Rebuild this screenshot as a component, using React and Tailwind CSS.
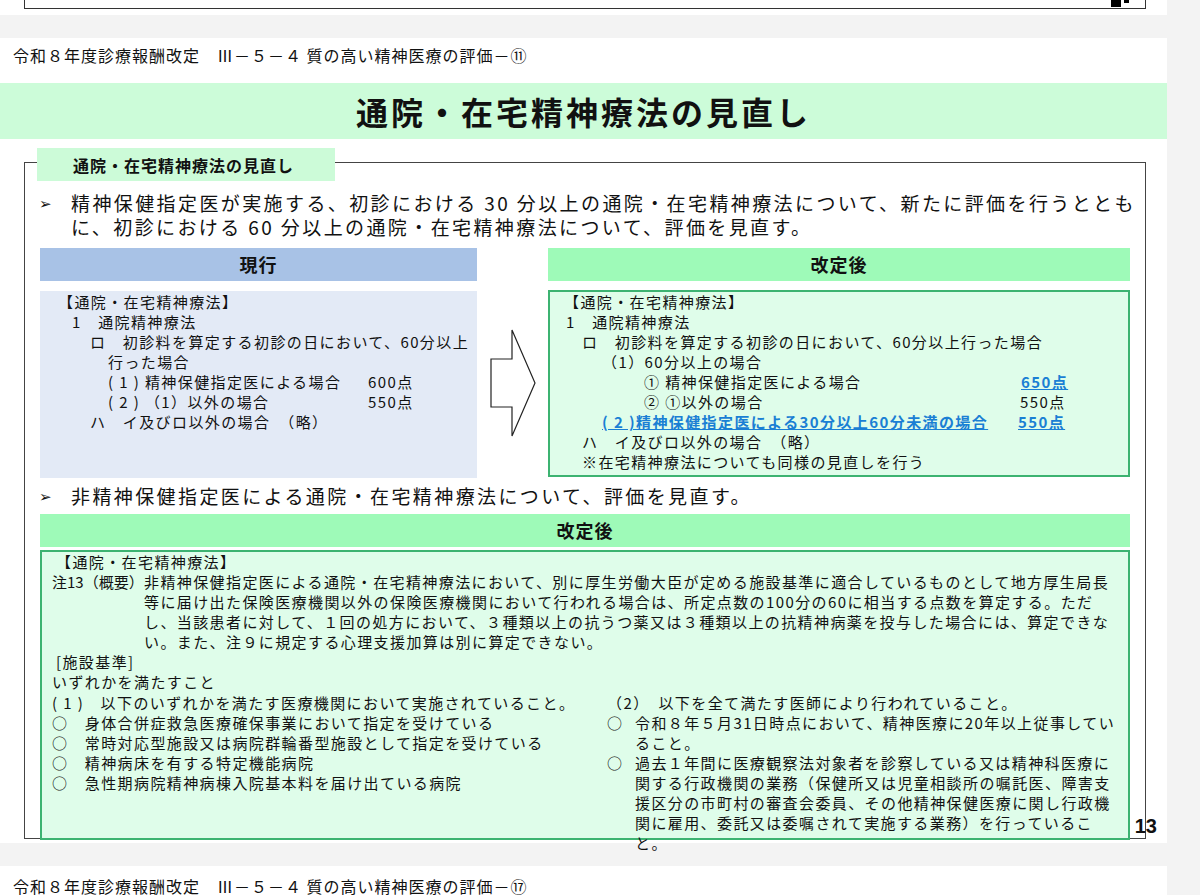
export default function App() {
  const f = { fontFamily: '"Noto Sans CJK JP", "Noto Sans", sans-serif' };
  return (
    <div className="w-[1200px] h-[895px] bg-[#f3f3f3] overflow-hidden text-[#111]" style={f}>
      <div className="w-[1167px] h-[15px] bg-white relative">
        <div className="ml-[24px] w-[1122px] h-[9px] border-l border-r border-b border-[#333]"></div>
        <div className="absolute right-[46px] top-0 w-[10px] h-[7px] bg-black"></div>
        <div className="absolute right-[38px] top-0 w-[5px] h-[3px] bg-black"></div>
      </div>
      <div className="h-[23px]"></div>
      <div className="w-[1167px] h-[805px] bg-white relative">
        <div className="h-[45px] pl-[13px] pt-[7px] text-[16px] tracking-[1px] leading-[20px]">令和８年度診療報酬改定　Ⅲ－５－４ 質の高い精神医療の評価－⑪</div>
        <div className="h-[56px] bg-[#ccfcd9] flex items-center justify-center text-[32px] font-bold tracking-[3px]">通院・在宅精神療法の見直し</div>
        <div className="relative mt-[23px] ml-[24px] w-[1122px] h-[677px] border border-[#444]">
          <div className="absolute left-[12px] top-[-15px] w-[298px] h-[33px] bg-[#ccfbd8] flex items-center pl-[36px] text-[16px] tracking-[1px] font-bold">通院・在宅精神療法の見直し</div>
          <div className="pt-[28px] pl-[14px] pr-[4px] text-[19px] tracking-[2.4px] leading-[24px] flex">
            <span className="w-[32px] shrink-0 text-[15px]">➢</span>
            <span>精神保健指定医が実施する、初診における 30 分以上の通院・在宅精神療法について、新たに評価を行うととも<br/>に、初診における 60 分以上の通院・在宅精神療法について、評価を見直す。</span>
          </div>
          <div className="flex mt-[9px] ml-[15px]">
            <div className="w-[437px]">
              <div className="h-[33px] bg-[#a8c2e6] flex items-center justify-center font-bold text-[18px] tracking-[1px]">現行</div>
              <div className="mt-[10px] h-[187px] bg-[#e3eaf6] pl-[18px] pt-[1px] text-[15px] tracking-[1.4px] leading-[20px]">
                <div>【通院・在宅精神療法】</div>
                <div className="pl-[14px]">1　通院精神療法</div>
                <div className="pl-[32px]">ロ　初診料を算定する初診の日において、60分以上</div>
                <div className="pl-[50px]">行った場合</div>
                <div className="pl-[50px] flex"><span className="w-[260px]">( 1 ) 精神保健指定医による場合</span><span>600点</span></div>
                <div className="pl-[50px] flex"><span className="w-[260px]">( 2 ) （1）以外の場合</span><span>550点</span></div>
                <div className="pl-[32px]">ハ　イ及びロ以外の場合　（略）</div>
              </div>
            </div>
            <div className="w-[71px] flex items-center justify-center pt-[40px]">
              <svg width="46" height="108" viewBox="0 0 46 108"><path d="M1 30 H22 V1 L45 54 L22 107 V78 H1 Z" fill="white" stroke="#222" strokeWidth="1.2"/></svg>
            </div>
            <div className="w-[582px]">
              <div className="h-[33px] bg-[#9efab8] flex items-center justify-center font-bold text-[18px] tracking-[1px]">改定後</div>
              <div className="mt-[9px] h-[187px] bg-[#dffdea] border-2 border-[#3cb371] pl-[14px] pt-[0px] text-[15px] tracking-[1.4px] leading-[20px]">
                <div>【通院・在宅精神療法】</div>
                <div className="pl-[2px]">1　通院精神療法</div>
                <div className="pl-[18px]">ロ　初診料を算定する初診の日において、60分以上行った場合</div>
                <div className="pl-[38px]">（1）60分以上の場合</div>
                <div className="pl-[80px] flex"><span className="w-[377px]">① 精神保健指定医による場合</span><span className="text-[#1a7fd4] font-bold underline">650点</span></div>
                <div className="pl-[80px] flex"><span className="w-[376px]">② ①以外の場合</span><span>550点</span></div>
                <div className="pl-[38px] flex text-[#1a7fd4] font-bold underline"><span className="w-[416px]">( 2 )精神保健指定医による30分以上60分未満の場合</span><span>550点</span></div>
                <div className="pl-[18px]">ハ　イ及びロ以外の場合　（略）</div>
                <div className="pl-[18px]">※在宅精神療法についても同様の見直しを行う</div>
              </div>
            </div>
          </div>
          <div className="pl-[14px] mt-[6px] text-[19px] tracking-[2.4px] leading-[24px] flex">
            <span className="w-[32px] shrink-0 text-[15px]">➢</span>
            <span>非精神保健指定医による通院・在宅精神療法について、評価を見直す。</span>
          </div>
          <div className="ml-[15px] w-[1090px] mt-[6px]">
            <div className="h-[33px] bg-[#9efab8] flex items-center justify-center font-bold text-[18px] tracking-[1px]">改定後</div>
            <div className="mt-[3px] h-[290px] bg-[#dffdea] border-2 border-[#3cb371] pl-[10px] pr-[6px] pt-[0px] text-[15px] tracking-[1.4px] leading-[20px]">
              <div className="pl-[4px]">【通院・在宅精神療法】</div>
              <div className="flex"><span className="w-[92px] shrink-0 tracking-normal">注13（概要）</span><span>非精神保健指定医による通院・在宅精神療法において、別に厚生労働大臣が定める施設基準に適合しているものとして地方厚生局長等に届け出た保険医療機関以外の保険医療機関において行われる場合は、所定点数の100分の60に相当する点数を算定する。ただし、当該患者に対して、１回の処方において、３種類以上の抗うつ薬又は３種類以上の抗精神病薬を投与した場合には、算定できない。また、注９に規定する心理支援加算は別に算定できない。</span></div>
              <div className="pl-[4px]">[施設基準]</div>
              <div>いずれかを満たすこと</div>
              <div className="flex mt-[1px]">
                <div className="w-[555px]">
                  <div>( 1 )　以下のいずれかを満たす医療機関において実施されていること。</div>
                  <div>○　身体合併症救急医療確保事業において指定を受けている</div>
                  <div>○　常時対応型施設又は病院群輪番型施設として指定を受けている</div>
                  <div>○　精神病床を有する特定機能病院</div>
                  <div>○　急性期病院精神病棟入院基本料を届け出ている病院</div>
                </div>
                <div className="w-[510px]">
                  <div>（2）　以下を全て満たす医師により行われていること。</div>
                  <div className="flex"><span className="w-[28px] shrink-0">○</span><span>令和８年５月31日時点において、精神医療に20年以上従事していること。</span></div>
                  <div className="flex"><span className="w-[28px] shrink-0">○</span><span>過去１年間に医療観察法対象者を診察している又は精神科医療に関する行政機関の業務（保健所又は児童相談所の嘱託医、障害支援区分の市町村の審査会委員、その他精神保健医療に関し行政機関に雇用、委託又は委嘱されて実施する業務）を行っていること。</span></div>
                </div>
              </div>
            </div>
          </div>
          <div className="absolute right-[-12px] bottom-[2px] text-[20px] font-bold leading-none" style={{ fontFamily: '"Liberation Sans", sans-serif' }}>13</div>
        </div>
      </div>
      <div className="h-[23px]"></div>
      <div className="w-[1167px] h-[40px] bg-white pl-[13px] pt-[10px] text-[16px] tracking-[1px] leading-[20px]">令和８年度診療報酬改定　Ⅲ－５－４ 質の高い精神医療の評価－⑰</div>
    </div>
  );
}
